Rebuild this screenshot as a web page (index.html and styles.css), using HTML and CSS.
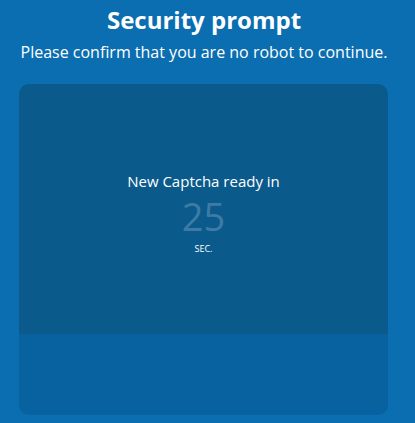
FILE: index.html
```html
<!DOCTYPE html>
<html>
<head>
  <title>Security prompt</title>
  <link rel="stylesheet" href="styles.css">
</head>
<body>
  <h1 class="title">Security prompt</h1>
  <p class="subtitle">Please confirm that you are no robot to continue.</p>
  <div class="captcha">
    <div class="captcha-top">
      <div class="wait-label">New Captcha ready in</div>
      <div class="countdown">25</div>
      <div class="unit">SEC.</div>
    </div>
    <div class="captcha-bottom"></div>
  </div>
</body>
</html>
```

FILE: styles.css
```css
body {
  margin: 0;
  padding: 0;
  background-color: #0a6eb0;
  font-family: "Open Sans", Arial, sans-serif;
  color: white;
}
.title,
.subtitle {
  text-align: center;
  padding-right: 7px;
}
.title {
  margin: 0;
  padding-top: 4px;
  font-size: 24px;
  font-weight: 700;
  line-height: 32px;
}
.subtitle {
  margin: 5px 0 0 0;
  font-size: 16px;
  line-height: 22px;
}
.captcha {
  margin: 21px 27px 0 19px;
  height: 331px;
  border-radius: 10px;
  overflow: hidden;
  display: flex;
  flex-direction: column;
}
.captcha-top {
  height: 250px;
  padding-top: 8px;
  box-sizing: border-box;
  background-color: #0a5a8b;
  display: flex;
  flex-direction: column;
  align-items: center;
  justify-content: center;
}
.captcha-bottom {
  flex: 1;
  background-color: #0862a0;
}
.wait-label {
  font-size: 15px;
  line-height: 20px;
}
.countdown {
  margin-top: 4px;
  font-size: 38px;
  font-weight: 400;
  line-height: 42px;
  color: #3f7aa6;
}
.unit {
  margin-top: 6px;
  font-size: 9px;
  line-height: 12px;
}
```
